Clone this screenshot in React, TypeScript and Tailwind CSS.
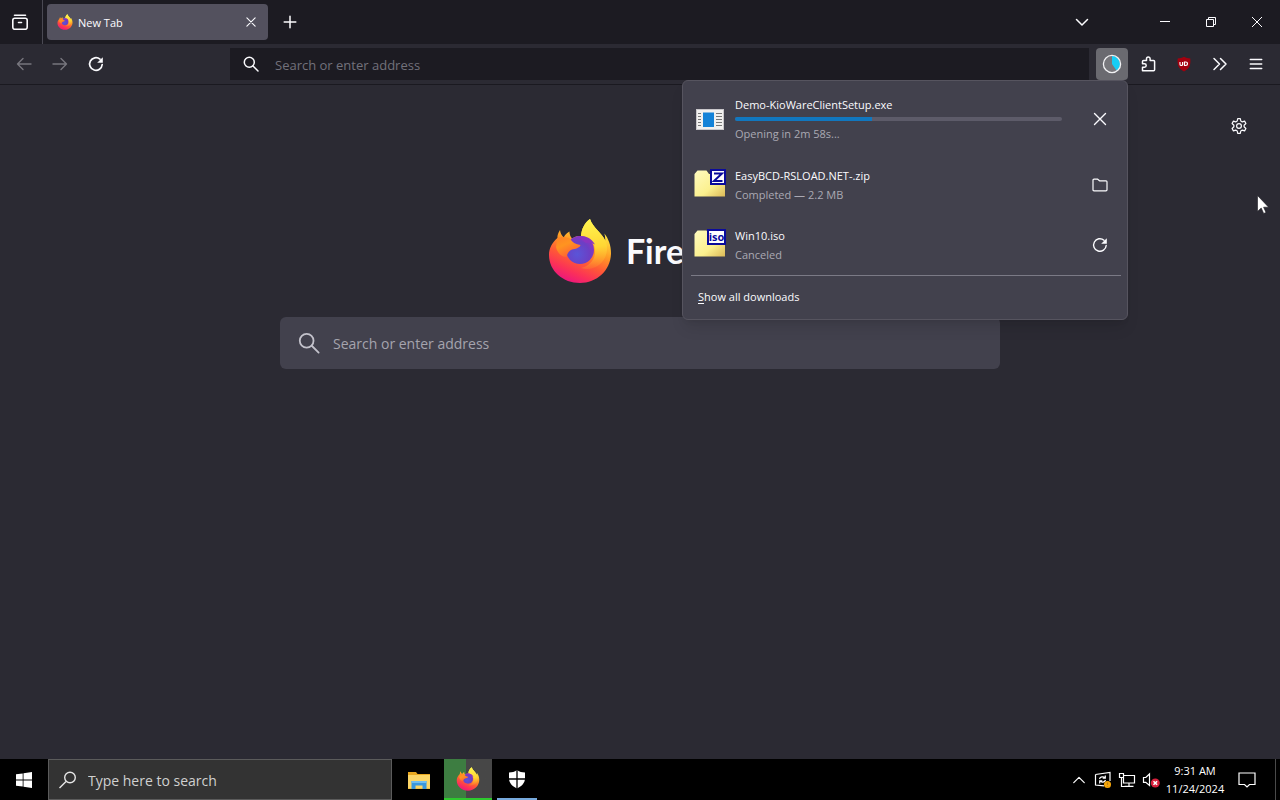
import React, { useId } from "react";

function FirefoxLogo({ className }: { className: string }) {
  const id = useId();
  return (
    <svg viewBox="0 0 64 66" className={className} aria-hidden="true">
      <defs>
        <linearGradient id={id + "b"} x1="50" y1="6" x2="24" y2="64" gradientUnits="userSpaceOnUse">
          <stop offset="0" stopColor="#fff44f" />
          <stop offset="0.2" stopColor="#ffd338" />
          <stop offset="0.42" stopColor="#ff9a25" />
          <stop offset="0.65" stopColor="#ff5a35" />
          <stop offset="0.85" stopColor="#fb3158" />
          <stop offset="1" stopColor="#ee1a78" />
        </linearGradient>
        <linearGradient id={id + "f"} x1="44" y1="2" x2="52" y2="56" gradientUnits="userSpaceOnUse">
          <stop offset="0" stopColor="#fff44f" />
          <stop offset="0.5" stopColor="#ffd634" />
          <stop offset="1" stopColor="#ff8a2a" stopOpacity="0" />
        </linearGradient>
        <radialGradient id={id + "p"} cx="0.4" cy="0.65" r="0.75">
          <stop offset="0" stopColor="#5a55d8" />
          <stop offset="0.6" stopColor="#6c3fc4" />
          <stop offset="1" stopColor="#9630c4" />
        </radialGradient>
        <linearGradient id={id + "h"} x1="10" y1="14" x2="22" y2="40" gradientUnits="userSpaceOnUse">
          <stop offset="0" stopColor="#ff7a2a" />
          <stop offset="0.5" stopColor="#ff9420" />
          <stop offset="1" stopColor="#ff5a38" />
        </linearGradient>
      </defs>
      <path
        fill={`url(#${id}b)`}
        d="M12 12c-2 3-2.600 5.500-2.600 8C4 24.500 1 30.500 1 37c0 16 14 28 31 28s31-13 31-30c0-7.500-2.600-14.500-6.600-19.500.7 2.500.9 4.500.8 7C54 15 45 10 42 1c-5.500 4-8.500 10-9 17-3.500 0-6.500.8-9 2.500-1.500-2-2.500-4-2.600-7-2.600 1.500-4.300 3.300-5.700 5.800C13.500 17.300 12.300 15 12 12z"
      />
      <path
        fill={`url(#${id}f)`}
        d="M42 1c-5.500 4-8.500 10-9 17 7 0 13 5 14 13 1 10-5 17-14 19 13 4 25-5 26-18 .3-4-.5-7-1.800-9.500C54 15 45 10 42 1z"
      />
      <circle cx="32" cy="32" r="14" fill={`url(#${id}p)`} />
      <path fill="#8a35c0" d="M29 18.500c7-1.500 14 1 18 8-3-1.500-6-2-9-1.500z" />
      <path
        fill={`url(#${id}h)`}
        d="M9.400 20c4-1.500 8-1.300 12.600.5 2 3.500 5.500 6 10.500 6.500-.6 3-5.500 4-8.500 4.500-3.200 1.500-4.500 3.500-5.500 7.500C13 39 9 34 8 29z"
      />
    </svg>
  );
}

type IconProps = { className?: string; children: React.ReactNode; w?: number };
function Ico({ className = "size-4", children, w = 1.3 }: IconProps) {
  return (
    <svg
      viewBox="0 0 16 16"
      className={`${className} shrink-0`}
      fill="none"
      stroke="currentColor"
      strokeWidth={w}
      strokeLinecap="round"
      strokeLinejoin="round"
      aria-hidden="true"
    >
      {children}
    </svg>
  );
}

const Reload = ({ w = 1.4 }: { w?: number }) => (
  <Ico w={w}>
    <path d="M14.200 8.500A6.300 6.300 0 1 1 12 3.200" />
    <path d="M14.800 1.200v5.600H9.200z" fill="currentColor" stroke="none" />
  </Ico>
);
const Magnifier = ({ className, w }: { className?: string; w?: number }) => (
  <Ico className={className} w={w}>
    <circle cx="6.300" cy="6.300" r="5" />
    <path d="M10 10l5 5" />
  </Ico>
);
const Cross = ({ className = "size-4", w = 1.2 }: { className?: string; w?: number }) => (
  <Ico className={className} w={w}>
    <path d="M2.500 2.500l11 11M13.500 2.500l-11 11" />
  </Ico>
);

function ToolButton({ label, className = "", children }: { label: string; className?: string; children: React.ReactNode }) {
  return (
    <button aria-label={label} className={`flex size-8 shrink-0 items-center justify-center rounded ${className}`}>
      {children}
    </button>
  );
}

function ProgramIcon() {
  return (
    <svg viewBox="0 0 32 32" className="size-8" aria-hidden="true">
      <rect x="2.500" y="6.500" width="27" height="20" fill="#f2f0ef" stroke="#c9c7cb" />
      <rect x="9" y="9.500" width="11" height="14.500" fill="#1482d8" />
      <path d="M4 10.500h3M4 13.500h3M4 16.500h3M4 19.500h3M4 22.500h3M22 10.500h6M22 13.500h6M22 16.500h6M22 19.500h6M22 22.500h6" stroke="#777" />
    </svg>
  );
}

function ArchiveIcon({ label }: { label: string }) {
  const id = useId();
  return (
    <svg viewBox="0 0 32 32" className="size-8" aria-hidden="true">
      <defs>
        <linearGradient id={id} x1="0" y1="0" x2="1" y2="1">
          <stop offset="0" stopColor="#fffbc0" />
          <stop offset="0.6" stopColor="#fbf08e" />
          <stop offset="1" stopColor="#dcb958" />
        </linearGradient>
      </defs>
      <path d="M.500 5l3-3.500h9L15 5h16v22.500H.500z" fill={`url(#${id})`} />
      {label === "Z" ? (
        <>
          <rect x="17" y="1" width="14" height="14" fill="#fff" stroke="#0b0b9c" strokeWidth="2" />
          <path d="M20 4.500h8L20 12h8.500" fill="none" stroke="#0b0b9c" strokeWidth="2" />
        </>
      ) : (
        <>
          <rect x="14" y="1" width="17" height="14" fill="#fff" stroke="#0b0b9c" strokeWidth="2" />
          <text
            x="22.500"
            y="12"
            textAnchor="middle"
            fontSize="11"
            fontWeight="700"
            fill="#0b0b9c"
            className="font-['Open_Sans',sans-serif]"
          >
            {label}
          </text>
        </>
      )}
    </svg>
  );
}

type DownloadProps = {
  name: string;
  status: string;
  icon: React.ReactNode;
  action: string;
  actionIcon: React.ReactNode;
  progress?: number;
};
function Download({ name, status, icon, action, actionIcon, progress }: DownloadProps) {
  return (
    <li className={`flex items-center pr-[11px] pl-[11px] ${progress === undefined ? "h-15" : "mb-px h-[70px]"}`}>
      {icon}
      <div className="ml-[9px] flex-1">
        <p className="text-[11px] leading-[19px] text-[#fbfbfe]">{name}</p>
        {progress !== undefined && (
          <div
            role="progressbar"
            aria-label={name}
            aria-valuenow={progress}
            className="my-[3px] h-1 overflow-hidden rounded-full bg-[#5d5b69]"
          >
            <div className="h-full bg-[#1177bf]" style={{ width: `${progress}%` }} />
          </div>
        )}
        <p className="text-[11px] leading-[19px] text-[#aaa9b3]">{status}</p>
      </div>
      <ToolButton label={action} className="ml-[22px]">
        {actionIcon}
      </ToolButton>
    </li>
  );
}

function DownloadsPanel() {
  return (
    <section
      aria-label="Downloads"
      className="absolute top-full right-0 z-10 w-[446px] rounded-md border border-[#56545f] bg-[#42414d] pt-[3px] shadow-lg"
    >
      <ul>
        <Download
          name="Demo-KioWareClientSetup.exe"
          status="Opening in 2m 58s..."
          progress={42}
          icon={<ProgramIcon />}
          action="Cancel"
          actionIcon={<Cross w={1.4} />}
        />
        <Download
          name="EasyBCD-RSLOAD.NET-.zip"
          status="Completed — 2.2 MB"
          icon={<ArchiveIcon label="Z" />}
          action="Open folder"
          actionIcon={
            <Ico w={1.2}>
              <path d="M1 3.200q0-1 1-1h3.700l1.800 1.600H14q1 0 1 1v8q0 1-1 1H2q-1 0-1-1z" />
            </Ico>
          }
        />
        <Download
          name="Win10.iso"
          status="Canceled"
          icon={<ArchiveIcon label="iso" />}
          action="Retry"
          actionIcon={<Reload />}
        />
      </ul>
      <hr className="mr-1.5 ml-2 border-[#7b7a86]" />
      <button className="flex h-[43px] w-full items-center px-[15px] text-[11px] text-[#fbfbfe]">
        <span>
          <u className="underline-offset-2">S</u>how all downloads
        </span>
      </button>
    </section>
  );
}

function TabStrip() {
  return (
    <header className="flex h-11 items-center bg-[#1c1b22]">
      <button aria-label="View recent browsing" className="flex h-full w-[42px] items-center justify-center pr-0.5">
        <Ico className="size-4" w={1.6}>
          <rect x="0.800" y="4.300" width="14.400" height="11" rx="2" />
          <path d="M2.500 1.200h11M6.500 8.500h3" />
        </Ico>
      </button>
      <div className="mr-1 h-full w-px bg-[#4a4953]" />
      <div className="flex h-9 w-[221px] items-center rounded bg-[#53515e] pr-[9px] pl-2.5">
        <FirefoxLogo className="size-4" />
        <span className="ml-[5px] flex-1 pt-0.5 text-[11px]">New Tab</span>
        <button aria-label="Close tab" className="flex size-4 items-center justify-center">
          <Cross className="size-3" w={1.5} />
        </button>
      </div>
      <button aria-label="Open a new tab" className="ml-1.5 flex size-8 items-center justify-center">
        <Ico className="size-4" w={1.5}>
          <path d="M8 2.200v11.600M2.200 8h11.600" />
        </Ico>
      </button>
      <button aria-label="List all tabs" className="mr-11 ml-auto flex size-8 items-center justify-center">
        <Ico w={1.5}>
          <path d="M2.500 5.500L8 11l5.500-5.500" />
        </Ico>
      </button>
      <button aria-label="Minimize" className="flex h-full w-[46px] items-center justify-center">
        <svg viewBox="0 0 10 10" className="size-2.5" stroke="currentColor" aria-hidden="true">
          <path d="M0 4.500h10" />
        </svg>
      </button>
      <button aria-label="Restore" className="flex h-full w-[46px] items-center justify-center">
        <svg viewBox="0 0 10 10" className="size-2.5" fill="none" stroke="currentColor" aria-hidden="true">
          <path d="M.500 2.500h7v7h-7zM2.500 2.500v-2h7v7h-2" />
        </svg>
      </button>
      <button aria-label="Close" className="flex h-full w-[46px] items-center justify-center">
        <svg viewBox="0 0 10 10" className="size-2.5" stroke="currentColor" aria-hidden="true">
          <path d="M0 0l10 10M10 0L0 10" />
        </svg>
      </button>
    </header>
  );
}

function Toolbar() {
  return (
    <nav className="flex h-[41px] items-start gap-1 border-b border-[#1a1920] bg-[#2b2a33] px-2 pt-1">
      <ToolButton label="Back" className="text-[#77767e]">
        <Ico w={1.4}>
          <path d="M15 8H1.500M7 2.500L1.500 8 7 13.500" />
        </Ico>
      </ToolButton>
      <ToolButton label="Forward" className="text-[#77767e]">
        <Ico w={1.4}>
          <path d="M1 8h13.500M9 2.500L14.500 8 9 13.500" />
        </Ico>
      </ToolButton>
      <ToolButton label="Reload">
        <Reload w={1.7} />
      </ToolButton>
      <label className="mr-[3px] ml-[114px] flex h-8 flex-1 items-center bg-[#1c1b22] pl-[13px]">
        <Magnifier className="size-4" w={1.5} />
        <input
          aria-label="Address"
          placeholder="Search or enter address"
          className="ml-4 flex-1 bg-transparent pt-[3px] text-[13px] outline-none placeholder:text-[#72717b]"
        />
      </label>
      <div className="relative">
        <ToolButton label="Downloads" className="bg-[#6a6a70]">
          <svg viewBox="0 0 20 20" className="size-5" aria-hidden="true">
            <circle cx="10" cy="10" r="8" fill="#77777c" />
            <path d="M10 10V2a8 8 0 0 1 4.500 14.600z" fill="#16cdf5" />
            <circle cx="10" cy="10" r="8.600" fill="none" stroke="#f2f2f4" strokeWidth="1.300" />
          </svg>
        </ToolButton>
        <DownloadsPanel />
      </div>
      <ToolButton label="Extensions">
        <Ico w={1.5}>
          <path d="M2.500 14.700V11.200h2a1.700 1.700 0 0 0 0-3.400h-2V5.500q0-1 1-1h3V2.800a1.800 1.800 0 0 1 3.600 0v1.700h3.500q1 0 1 1v8.200q0 1-1 1z" />
        </Ico>
      </ToolButton>
      <ToolButton label="uBlock Origin">
        <svg viewBox="0 0 16 16" className="size-4" aria-hidden="true">
          <path d="M8 .800c2 1.300 4 1.700 6.300 1.700C14.800 8.500 13.800 12.500 8 15.500 2.200 12.500 1.200 8.500 1.700 2.500 4 2.500 6 2.100 8 .800z" fill="#a3000f" />
          <path
            d="M4 6v2.200q0 1.300 1.300 1.300T6.600 8.200V6M8.500 6v3.500h1.200q1.800 0 1.800-1.750T9.700 6z"
            fill="none"
            stroke="#fff"
            strokeWidth="1.200"
          />
        </svg>
      </ToolButton>
      <ToolButton label="More tools">
        <Ico w={1.500}>
          <path d="M2 2.500L7.500 8 2 13.500M8.500 2.500L14 8l-5.500 5.500" />
        </Ico>
      </ToolButton>
      <ToolButton label="Open application menu">
        <Ico w={1.500}>
          <path d="M2.300 3.500h11.400M2.300 8h11.400M2.300 12.500h11.400" />
        </Ico>
      </ToolButton>
    </nav>
  );
}

function NewTabPage() {
  return (
    <main className="relative flex flex-1 flex-col items-center bg-[#2b2a33] px-4 pt-[133px]">
      <button aria-label="Personalize new tab" className="absolute top-[25px] right-[25px] flex size-8 items-center justify-center">
        <Ico w={1.200}>
          <path d="M6.700 .600h2.600l.5 2.400 1.500.900 2.300-.8 1.300 2.400L13.100 7.200v1.600l1.800 1.700-1.300 2.400-2.300-.8-1.500.900L9.300 15.400H6.700l-.5-2.400-1.500-.900-2.300.8-1.300-2.400 1.800-1.700V7.200L1.100 5.500l1.300-2.400 2.300.8 1.500-.900z" />
          <circle cx="8" cy="8" r="2.400" />
        </Ico>
      </button>
      <div className="flex items-center gap-3.5">
        <FirefoxLogo className="h-[66px] w-16" />
        <h1 className="font-['Lato',sans-serif] text-[34px] leading-10 font-bold text-[#fbfbfe]">Firefox</h1>
      </div>
      <label className="mt-[33px] flex h-[52px] w-full max-w-[720px] items-center rounded-md bg-[#42414d] pl-[18px]">
        <Magnifier className="size-[22px] text-[#c3c2cb]" w={1.300} />
        <input
          aria-label="Search or enter address"
          placeholder="Search or enter address"
          className="ml-[13px] flex-1 bg-transparent pt-0.5 text-sm outline-none placeholder:text-[#a5a4ae]"
        />
      </label>
      <svg viewBox="0 0 12 19" className="absolute top-[110px] right-[11px] h-[19px] w-3" aria-hidden="true">
        <path d="M.500.500v16l3.700-3.500 2.500 5.500 2.300-1-2.400-5.300h5z" fill="#fff" stroke="#1c1b22" strokeWidth="0.600" />
      </svg>
    </main>
  );
}

function Taskbar() {
  return (
    <footer className="flex h-[41px] items-stretch bg-black">
      <button aria-label="Start" className="flex w-12 items-center justify-center">
        <svg viewBox="0 0 16 16" className="size-4" fill="#fff" aria-hidden="true">
          <path d="M0 2.300L6.700 1.400v6.200H0zM7.500 1.300L16 0v7.600H7.500zM0 8.400h6.700v6.200L0 13.700zM7.500 8.400H16V16l-8.500-1.200z" />
        </svg>
      </button>
      <label className="flex w-[344px] items-center border border-[#5b5b5b] bg-[#333] pl-2.5">
        <svg viewBox="0 0 18 18" className="size-[18px]" fill="none" stroke="#e6e6e6" strokeWidth="1.400" aria-hidden="true">
          <circle cx="11" cy="6.500" r="5.300" />
          <path d="M7 10.500L.500 17" />
        </svg>
        <input
          aria-label="Type here to search"
          placeholder="Type here to search"
          className="ml-[11px] min-w-0 flex-1 bg-transparent pt-0.5 text-sm outline-none placeholder:text-[#d0d0d0]"
        />
      </label>
      <button aria-label="File Explorer" className="ml-0.5 flex w-[50px] items-center justify-center">
        <svg viewBox="0 0 22 20" className="h-5 w-[22px]" aria-hidden="true">
          <path d="M0 2h8l1.500 2H22v15H0z" fill="#e9a820" />
          <path d="M0 5h22v13.500H0z" fill="#fcd667" />
          <path d="M3.500 19v-8h15v8h-4v-3.500h-7V19z" fill="#3a97dd" />
          <path d="M3.500 11h15v2h-15z" fill="#6fbdf0" />
        </svg>
      </button>
      <button aria-label="Firefox" className="flex w-12 flex-col bg-linear-to-r from-[#3d7d41] from-45% to-[#474747] to-45%">
        <span className="flex flex-1 items-center justify-center self-stretch">
          <FirefoxLogo className="size-6" />
        </span>
        <span className="h-0.5 w-full bg-[#2ec92e]" />
      </button>
      <button aria-label="Windows Security" className="flex w-[50px] flex-col">
        <span className="flex flex-1 items-center justify-center self-stretch">
          <svg viewBox="0 0 18 20" className="h-5 w-[18px]" aria-hidden="true">
            <path d="M9 1c2.500 1.800 5 2.500 8 2.500V9c0 5-3 8-8 10.500C4 17 1 14 1 9V3.500C4 3.500 6.500 2.800 9 1z" fill="#fff" />
            <path d="M9 0v20M0 10h18" stroke="#000" strokeWidth="1.300" />
          </svg>
        </span>
        <span className="mx-[5px] h-0.5 self-stretch bg-[#76a9dc]" />
      </button>
      <div className="ml-auto flex items-center text-white">
        <button aria-label="Show hidden icons" className="flex h-full w-6 items-center justify-center">
          <Ico className="size-3.5" w={1.400}>
            <path d="M2 11l6-6 6 6" />
          </Ico>
        </button>
        <button aria-label="Windows Update" className="flex h-full w-6 items-center justify-center">
          <svg viewBox="0 0 18 18" className="size-[18px]" fill="none" stroke="#fff" strokeWidth="1.200" aria-hidden="true">
            <path d="M1.500 3.500L16 1.500V10M1.500 3.500V14l8.500.8" />
            <path d="M5.500 8c.6-2.300 4-3 5.500-1M11.300 4.500V7.200H8.700M11.500 9c-.6 2.300-4 3-5.500 1M5.700 12.500V9.800h2.600" />
            <circle cx="13.500" cy="13.500" r="3.500" fill="#f6a609" stroke="none" />
            <path d="M13.500 11.500v2.500M13.500 15v.8" stroke="#b98215" />
          </svg>
        </button>
        <button aria-label="Network" className="flex h-full w-6 items-center justify-center">
          <svg viewBox="0 0 18 16" className="h-4 w-[18px]" fill="none" stroke="#fff" strokeWidth="1.200" aria-hidden="true">
            <path d="M6 3.500h10.500v7.500h-11V6M11 11v3M6.500 14.400h9M1.500 1.500h4v4h-4zM3.500 5.500v9h3" />
          </svg>
        </button>
        <button aria-label="Volume muted" className="flex h-full w-6 items-center justify-center">
          <svg viewBox="0 0 18 16" className="h-4 w-[18px]" fill="none" stroke="#fff" strokeWidth="1.200" aria-hidden="true">
            <path d="M1.500 5.500h2.300L7.500 2v11.500L3.800 10.300H1.500z" />
            <circle cx="13.300" cy="11" r="4.500" fill="#d8203c" stroke="none" />
            <path d="M11.500 9.200l3.600 3.600M15.100 9.200l-3.600 3.600" strokeWidth="1.500" />
          </svg>
        </button>
        <div className="w-16 text-center text-[11px] leading-[18px]">
          <p>9:31 AM</p>
          <p>11/24/2024</p>
        </div>
        <button aria-label="Notifications" className="flex h-full w-10 items-center justify-center">
          <svg viewBox="0 0 18 16" className="h-4 w-[18px]" fill="none" stroke="#fff" strokeWidth="1.200" aria-hidden="true">
            <path d="M1 1h16v11.500h-5.500L9 15l-2.500-2.500H1z" />
          </svg>
        </button>
        <div className="mr-1 ml-2 h-full w-px bg-[#4a4a4a]" />
      </div>
    </footer>
  );
}

export default function App() {
  return (
    <div className="flex min-h-screen flex-col bg-[#2b2a33] font-['Open_Sans','Noto_Sans',sans-serif] text-[#fbfbfe]">
      <TabStrip />
      <Toolbar />
      <NewTabPage />
      <Taskbar />
    </div>
  );
}
